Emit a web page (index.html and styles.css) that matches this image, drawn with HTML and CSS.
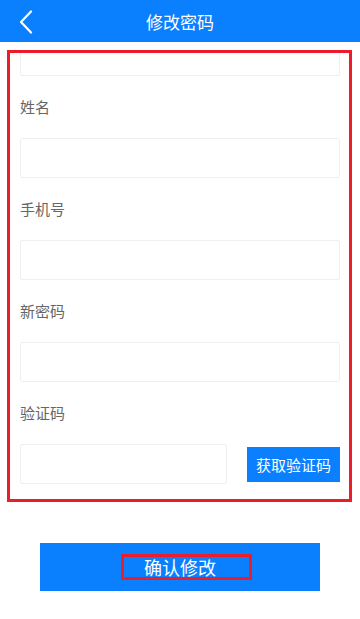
FILE: index.html
```html
<!DOCTYPE html>
<html lang="zh">

<head>
    <meta charset="UTF-8">
    <meta name="viewport" content="width=device-width, initial-scale=1.0">
    <title>修改密码</title>
    <link rel="stylesheet" href="styles.css">
</head>

<body>
    <div class="header">
        <a class="back" href="#">
            <svg width="14" height="24" viewBox="0 0 14 24">
                <path d="M12 1.5 L2 12 L12 22.5" fill="none" stroke="#fff" stroke-width="2.2" stroke-linecap="round" stroke-linejoin="round" />
            </svg>
        </a>
        <h1>修改密码</h1>
    </div>

    <form class="form">
        <div class="input cut"></div>

        <div class="label">姓名</div>
        <input class="input" type="text">

        <div class="label">手机号</div>
        <input class="input" type="tel">

        <div class="label">新密码</div>
        <input class="input" type="password">

        <div class="label">验证码</div>
        <div class="code-row">
            <input class="input code" type="text">
            <button type="button" class="get-code">获取验证码</button>
        </div>
    </form>

    <button class="confirm"><span>确认修改</span></button>
</body>

</html>
```

FILE: styles.css
```css
* {
    box-sizing: border-box;
}

body {
    margin: 0;
    background: #fff;
    font-family: "Noto Sans CJK SC", "Noto Sans", sans-serif;
}

.header {
    height: 42px;
    background-color: #0a80ff;
    display: flex;
    align-items: center;
    justify-content: center;
    position: relative;
}

.header h1 {
    margin: 0;
    color: #fff;
    font-size: 17px;
    font-weight: normal;
}

.back {
    position: absolute;
    left: 19px;
    top: 10px;
    display: block;
}

.form {
    margin: 8px 8px 0 7px;
    border: 3px solid #ec1c2a;
    padding: 0 9px 15px 10px;
}

.input {
    display: block;
    width: 100%;
    height: 40px;
    border: 1px solid #efefef;
    border-radius: 2px;
    background: #fff;
    outline: none;
}

.input.cut {
    height: 23px;
    border-top: none;
    border-radius: 0 0 2px 2px;
}

.label {
    margin: 20px 0;
    line-height: 22px;
    font-size: 15px;
    color: #666;
}

.code-row {
    display: flex;
    align-items: center;
    justify-content: space-between;
}

.input.code {
    width: 207px;
}

.get-code {
    width: 93px;
    height: 35px;
    border: none;
    background-color: #0a80ff;
    color: #fff;
    font-family: inherit;
    font-size: 15px;
    padding: 0;
}

.confirm {
    display: flex;
    align-items: center;
    justify-content: center;
    width: 280px;
    height: 48px;
    margin: 41px 0 0 40px;
    border: none;
    background-color: #0a80ff;
    color: #fff;
    font-family: inherit;
    font-size: 18px;
    padding: 0;
}

.confirm span {
    border: 3px solid #ec1c2a;
    padding: 0 33px 0 20px;
    line-height: 20px;
    margin-left: 13px;
}
```
